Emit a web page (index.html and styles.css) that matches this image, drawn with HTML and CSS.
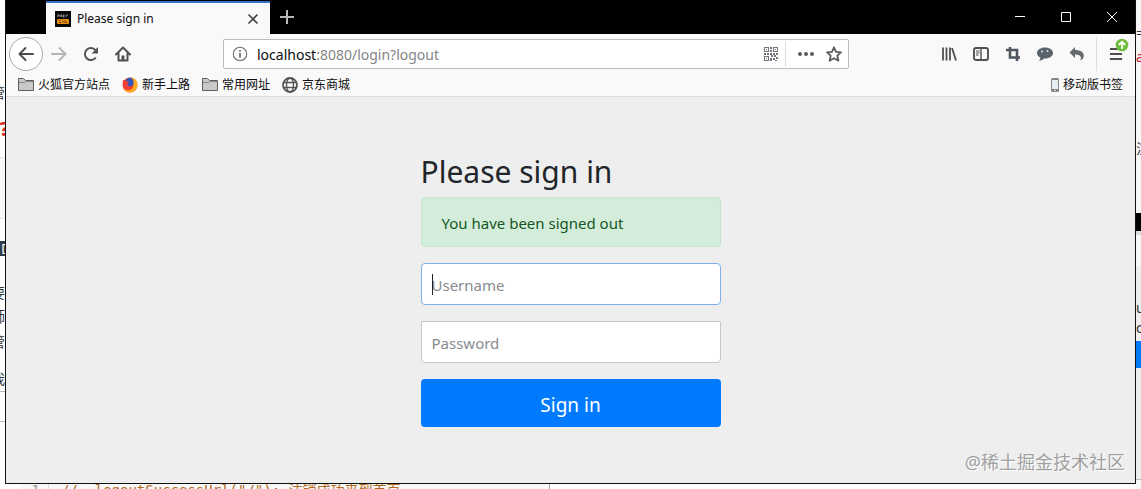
FILE: index.html
```html
<!DOCTYPE html>
<html lang="zh-CN">
<head>
<meta charset="utf-8">
<title>Please sign in</title>
<link rel="stylesheet" href="styles.css">
</head>
<body>
<div class="desktop" aria-hidden="true">
  <div class="strip strip-left">
    <span class="frag l1">管</span>
    <span class="frag l2">?</span>
    <span class="panel l3"></span>
    <span class="frag l4">D</span>
    <span class="frag l5">要</span>
    <span class="frag l6">師</span>
    <span class="frag l7">管</span>
    <span class="frag l8">我</span>
    <span class="panel l9"></span>
  </div>
  <div class="strip strip-right">
    <span class="frag r1">=</span>
    <span class="frag r2">an</span>
    <span class="frag r3">注</span>
    <span class="panel r4"></span>
    <span class="panel r5"></span>
    <span class="frag r6">u</span>
    <span class="frag r7">c</span>
    <span class="panel r8"></span>
  </div>
  <div class="code-strip"><span class="line-no">1</span><code class="code">//&nbsp; logoutSuccessUrl("/"); 注销成功来到首页</code></div>
</div>

<div class="window">
  <header class="titlebar">
    <div class="tab">
      <svg class="favicon" width="16" height="16" viewBox="0 0 16 16"><rect width="16" height="16" fill="#080808"/><path d="M3 6V3.500l2 2V3.500M6.500 3.500V6M9.500 4H8v2h1.500M11 4v2M13 4h-1.500" stroke="#bbb" stroke-width=".8" fill="none"/><rect x="2" y="8" width="12" height="5" rx="1" fill="#e88c12"/><path d="M4 9.500h1.500M4 11.500h2M8 9.500v2M10 9.500v2h2" stroke="#593307" stroke-width=".8" fill="none"/></svg>
      <span class="tab-title">Please sign in</span>
      <button class="tab-close" aria-label="Close tab"><svg width="12" height="12" viewBox="0 0 12 12"><path d="M1.500 1.500l9 9M10.500 1.500l-9 9" stroke="#444" stroke-width="1.600"/></svg></button>
    </div>
    <button class="new-tab" aria-label="New tab"><svg width="14" height="14" viewBox="0 0 14 14"><path d="M7 0v14M0 7h14" stroke="#b8b8b8" stroke-width="2"/></svg></button>
    <div class="controls">
      <button aria-label="Minimize"><svg width="10" height="10" viewBox="0 0 10 10"><path d="M0 4.500h10" stroke="#fff"/></svg></button>
      <button aria-label="Maximize"><svg width="10" height="10" viewBox="0 0 10 10"><path d="M.5.5h9v9h-9z" stroke="#fff" fill="none"/></svg></button>
      <button aria-label="Close"><svg width="10" height="10" viewBox="0 0 10 10"><path d="M0 0l10 10M10 0L0 10" stroke="#fff"/></svg></button>
    </div>
  </header>

  <nav class="toolbar" aria-label="Navigation">
    <button class="back" aria-label="Back"><svg width="16" height="16" viewBox="0 0 16 16"><path d="M15 8H2M7.500 2L1.500 8l6 6" fill="none" stroke="#4c4c4c" stroke-width="2" stroke-linecap="round" stroke-linejoin="round"/></svg></button>
    <button class="tool" aria-label="Forward"><svg width="16" height="16" viewBox="0 0 16 16"><path d="M1 8h13M8.500 2l6 6-6 6" fill="none" stroke="#b5b5b5" stroke-width="2" stroke-linecap="round" stroke-linejoin="round"/></svg></button>
    <button class="tool" aria-label="Reload"><svg width="16" height="16" viewBox="0 0 16 16"><path d="M12.800 11.500A6 6 0 1 1 12.500 4.200" fill="none" stroke="#555" stroke-width="2"/><path d="M15 1v6.500H8.500z" fill="#555"/></svg></button>
    <button class="tool" aria-label="Home"><svg width="16" height="16" viewBox="0 0 16 16"><path d="M1 8.500l7-7 7 7M3.500 7.500v7h9v-7" fill="none" stroke="#505050" stroke-width="2" stroke-linecap="round" stroke-linejoin="round"/><path d="M6.500 15V9.500h3V15z" fill="#505050"/></svg></button>
    <span class="spring"></span>
    <div class="urlbar">
      <svg width="16" height="16" viewBox="0 0 16 16"><circle cx="8" cy="8" r="6.700" fill="none" stroke="#707070" stroke-width="1.100"/><path d="M8 7v4.500M8 4v1.700" stroke="#606060" stroke-width="1.600"/></svg>
      <a class="url" href="#"><span class="host">localhost</span>:8080/login?logout</a>
      <svg class="qr" width="16" height="16" viewBox="0 0 16 16"><path d="M1.500 1.500h4v4h-4zM10.500 1.500h4v4h-4zM1.500 10.500h4v4h-4z" fill="none" stroke="#77777f" stroke-width="1.100"/><path d="M3 3h1v1H3zM12 3h1v1h-1zM3 12h1v1H3zM7 1h2v2H7zM7 4h2v2H7zM1 7h2v2H1zM4 7h2v2H4zM7 7h2v2H7zM10 7h2v2h-2zM13 7h2v2h-2zM8 9h2v2H8zM11 9h2v2h-2zM7 12h2v3H7zM10 12h2v2h-2zM13 11h2v2h-2zM12 14h2v1h-2z" fill="#77777f"/></svg>
      <span class="url-divider"></span>
      <button class="url-button" aria-label="Page actions"><svg width="16" height="16" viewBox="0 0 16 16"><g fill="#5c5c5c"><circle cx="2" cy="8" r="2"/><circle cx="8" cy="8" r="2"/><circle cx="14" cy="8" r="2"/></g></svg></button>
      <button class="url-button" aria-label="Bookmark"><svg width="16" height="16" viewBox="0 0 16 16"><path d="M8 1.300l2 4.500 5 .5-3.700 3.400 1.100 5L8 12.200l-4.400 2.500 1.100-5L1 6.300l5-.5z" fill="none" stroke="#5c5c5c" stroke-width="1.800" stroke-linejoin="round"/></svg></button>
    </div>
    <span class="spring"></span>
    <button class="tool" aria-label="Library"><svg width="16" height="16" viewBox="0 0 16 16"><path d="M2 1.500v13M5.500 1.500v13M9 1.500v13M11 2l4 12.500" stroke="#505050" stroke-width="1.800"/></svg></button>
    <button class="tool" aria-label="Sidebars"><svg width="16" height="16" viewBox="0 0 16 16"><rect x="1" y="2" width="14" height="12" rx="2" fill="none" stroke="#505050" stroke-width="1.900"/><path d="M8 2v12" stroke="#505050" stroke-width="1.400"/><path d="M3 5h3.500M3 7h3.500M3 9h2.500" stroke="#505050"/></svg></button>
    <button class="tool" aria-label="Crop"><svg width="16" height="16" viewBox="0 0 16 16"><path d="M1 4h11v8.500M5 1v10.500h10M12 11v4" fill="none" stroke="#4f565d" stroke-width="2.600"/></svg></button>
    <button class="tool" aria-label="Messages"><svg width="16" height="16" viewBox="0 0 16 16"><path d="M8 1.500c4.500 0 8 2.400 8 5.500s-3.500 5.500-8 5.500l-1-.1C5.500 14 3.500 14.700 2 14.500c1-.7 1.500-1.700 1.300-2.900C1.300 10.600 0 9 0 7c0-3.100 3.500-5.500 8-5.500z" fill="#59636c"/><circle cx="5" cy="5.500" r="1" fill="#dfe3e6"/><circle cx="10.500" cy="5" r="1" fill="#dfe3e6"/></svg></button>
    <button class="tool" aria-label="Undo"><svg width="16" height="16" viewBox="0 0 16 16"><path d="M6 1v3c5 0 9 2 8.800 6-.1 2-1.500 4-3.800 4.500 1-1.200 1.200-2.500.6-3.700C10.800 9.200 9 8.500 6 8.500V12L.5 6.500z" fill="#656b70"/></svg></button>
    <span class="tool-divider"></span>
    <button class="tool menu" aria-label="Menu"><svg width="16" height="16" viewBox="0 0 16 16"><path d="M2 3h12M2 8h12M2 13h12" stroke="#505050" stroke-width="2"/></svg>
      <svg class="badge" width="14" height="14" viewBox="0 0 14 14"><circle cx="7" cy="7" r="6.300" fill="#70bd3c"/><path d="M7 11V4M3.800 7L7 3.700 10.200 7" fill="none" stroke="#fff" stroke-width="1.800"/></svg></button>
  </nav>

  <div class="bookmarks">
    <a class="bookmark" href="#"><svg width="16" height="16" viewBox="0 0 16 16"><path d="M.5 13.500v-12h5l2 2h8v10z" fill="#c9c9c9" stroke="#606060"/><path d="M1 5.500h6l1-1h7" stroke="#8a8a8a" fill="none"/></svg>火狐官方站点</a>
    <a class="bookmark" href="#"><svg width="16" height="16" viewBox="0 0 16 16"><circle cx="8" cy="8" r="7.500" fill="#f0442d"/><path d="M9 .5c4 .5 6.700 3.500 6.500 7.500-.2 4-3.500 7.500-7.500 7.500-3 0-5-1.500-6-3.500 3 2 7 2 8.500-1S12 5 9 .5z" fill="#ffad22"/><path d="M4 4c0-2 2-3.500 4.500-3.200C11 2 12 4 11.500 6.500 11 9 8.500 10 6 9.500 4 9 3.500 6.500 4 4z" fill="#3156be"/><path d="M1 3l3 1 3 1-1.500 2C6 9 8 10 10 9c-1.500 3-6.500 3-8 0C.5 7 .5 5 1 3z" fill="#ee3d37"/></svg>新手上路</a>
    <a class="bookmark" href="#"><svg width="16" height="16" viewBox="0 0 16 16"><path d="M.5 13.500v-12h5l2 2h8v10z" fill="#c9c9c9" stroke="#606060"/><path d="M1 5.500h6l1-1h7" stroke="#8a8a8a" fill="none"/></svg>常用网址</a>
    <a class="bookmark" href="#"><svg width="16" height="16" viewBox="0 0 16 16"><g fill="none" stroke="#555" stroke-width="1.300"><circle cx="8" cy="8" r="7" stroke-width="1.800"/><ellipse cx="8" cy="8" rx="3.500" ry="7"/><path d="M1.500 5.500h13M1.500 10.500h13"/></g></svg>京东商城</a>
    <a class="bookmark mobile" href="#"><svg width="10" height="16" viewBox="0 0 10 16"><rect x="1" y="1" width="8" height="14" rx="1.500" fill="#858585"/><path d="M2 3h6v9H2z" fill="#e8edf2"/><path d="M4 13.500h2" stroke="#ddd"/></svg>移动版书签</a>
  </div>

  <main class="page">
    <form class="signin">
      <h2 class="heading">Please sign in</h2>
      <div class="alert" role="alert">You have been signed out</div>
      <div class="field">
        <input class="control focused" type="text" placeholder="Username" aria-label="Username">
        <span class="caret"></span>
      </div>
      <div class="field">
        <input class="control password" type="password" placeholder="Password" aria-label="Password">
      </div>
      <button class="submit" type="button">Sign in</button>
    </form>
    <span class="watermark">@稀土掘金技术社区</span>
  </main>
</div>
</body>
</html>
```
FILE: styles.css
```css
* { box-sizing: border-box; }
body {
  margin: 0;
  height: 100vh;
  padding: 0 5px 5px;
  overflow: hidden;
  background: #fff;
  font-family: "Noto Sans", "Noto Sans CJK SC", sans-serif;
}
button { border: 0; padding: 0; background: none; font: inherit; }
button, .bookmark { display: flex; align-items: center; }
button { justify-content: center; }
svg { flex: none; display: block; }
a { text-decoration: none; }

/* Content that shows round the window's edges */
.strip { position: absolute; top: 0; bottom: 0; width: 5px; overflow: hidden; }
.strip-left { left: 0; }
.strip-right { right: 0; background: #f7f7f7; }
.frag, .panel { position: absolute; font-size: 14px; line-height: 18px; color: #333; }
.strip-left .frag { right: 0; }
.strip-right .frag { left: 0; }
.panel { left: 0; right: 0; }
.l1 { top: 84px; }
.strip-left .l2 { top: 120px; right: -4px; color: #d5301c; font-weight: 700; font-size: 20px; }
.l3 { top: 157px; height: 62px; background: #f8f8f8; border: solid #e4e4e4; border-width: 1px 0; }
.strip-left .l4 { top: 241px; left: 0; right: auto; height: 15px; padding-left: 1px; line-height: 15px; background: #333b45; color: #fff; }
.l5 { top: 284px; }
.l6 { top: 308px; }
.l7 { top: 333px; }
.l8 { top: 370px; }
.l9 { top: 391px; height: 31px; border: solid #bbb; border-width: 1px 0; }
.r1 { top: 24px; }
.r2 { top: 48px; }
.strip-right .r2 { color: #c8102e; }
.r3 { top: 140px; }
.r4 { top: 213px; height: 22px; background: #000; border-bottom: 4px solid #ddd; }
.r5 { top: 266px; bottom: 9px; background: #eee; border-bottom: 1px solid #bbb; }
.r6 { top: 299px; }
.r7 { top: 319px; }
.r8 { top: 341px; height: 27px; background: #007bff; }
.code-strip {
  position: absolute;
  left: 20px;
  bottom: 0;
  width: 530px;
  height: 5px;
  overflow: hidden;
  display: flex;
  background: #f8f8f8;
  border-right: 1px solid #aaa;
  font: 14px/12px "DejaVu Sans Mono", "Noto Sans CJK SC", monospace;
  color: #b36a1e;
}
.line-no { width: 29px; padding-right: 8px; text-align: right; color: #999; border-right: 1px solid #ddd; }
.code { padding-left: 12px; font: inherit; white-space: nowrap; }

.window {
  position: relative;
  height: 100%;
  display: flex;
  flex-direction: column;
  border: solid #111;
  border-width: 0 1px 1px;
  background: #eee;
}

.titlebar { display: flex; height: 34px; padding-left: 40px; background: #000; }
.tab {
  display: flex;
  align-items: center;
  width: 224px;
  margin-top: 1px;
  padding: 0 11px 0 9px;
  border-top: 2px solid #3172c4;
  background: #f9f9fa;
}
.tab-title { flex: 1; padding-left: 6px; font-size: 12px; color: #0c0c0d; }
.new-tab { width: 34px; }
.controls { display: flex; margin-left: auto; }
.controls button { width: 46px; }

.toolbar { display: flex; align-items: center; height: 40px; padding: 0 3px; background: #f9f9fa; }
.back { width: 34px; height: 34px; border: 1px solid #aaa; border-radius: 50%; background: #fff; }
.tool { width: 32px; height: 32px; }
.spring { flex: 84; }
.urlbar {
  flex: 616;
  display: flex;
  align-items: center;
  height: 30px;
  padding-left: 8px;
  border: 1px solid #bbb;
  border-radius: 2px;
  background: #fff;
}
.url { flex: 1; padding-left: 9px; font-size: 14px; color: #858585; }
.host { color: #0c0c0d; }
.url-divider { width: 1px; height: 26px; margin: 0 6px; background: #ddd; }
.url-button { width: 28px; height: 28px; }
.tool-divider { width: 1px; height: 34px; margin: 0 3px; background: #ddd; }
.menu { position: relative; }
.badge { position: absolute; top: 0; right: 3px; }

.bookmarks {
  display: flex;
  align-items: center;
  gap: 12px;
  height: 23px;
  padding: 0 12px;
  border-bottom: 1px solid #ddd;
  background: #f9f9fa;
}
.bookmark { gap: 4px; font-size: 12px; line-height: 16px; color: #0c0c0d; }
.mobile { margin-left: auto; gap: 3px; }

.page { position: relative; flex: 1; padding-top: 56px; }
.signin { width: 300px; margin: 0 auto; }
.heading { margin: 0 0 6px; font-size: 30px; line-height: 38px; font-weight: 400; color: #212529; }
.alert {
  height: 50px;
  margin-bottom: 16px;
  padding: 13px 20px;
  border: 1px solid #c3e6cb;
  border-radius: 4px;
  background: #d4edda;
  font-size: 15px;
  line-height: 24px;
  color: #155724;
}
.field { position: relative; margin-bottom: 16px; }
.control {
  display: block;
  width: 100%;
  height: 42px;
  padding: 2px 10px 0;
  border: 1px solid #c6c6c6;
  border-radius: 4px;
  background: #fff;
  font: 15px "Noto Sans", sans-serif;
  color: #495057;
}
.control::placeholder { color: #868c92; opacity: 1; }
.focused { border-color: #80b0e8; }
.password { border-radius: 0 0 4px 4px; }
.caret { position: absolute; left: 11px; top: 11px; width: 1px; height: 21px; background: #222; }
.submit {
  width: 100%;
  height: 48px;
  padding-top: 4px;
  border-radius: 4px;
  background: #007bff;
  font-size: 19px;
  color: #fff;
}
.watermark {
  position: absolute;
  right: 10px;
  bottom: 8px;
  font-size: 18px;
  line-height: 26px;
  color: #a0a0a0;
  text-shadow: 1px 1px 0 #fff;
}
```
